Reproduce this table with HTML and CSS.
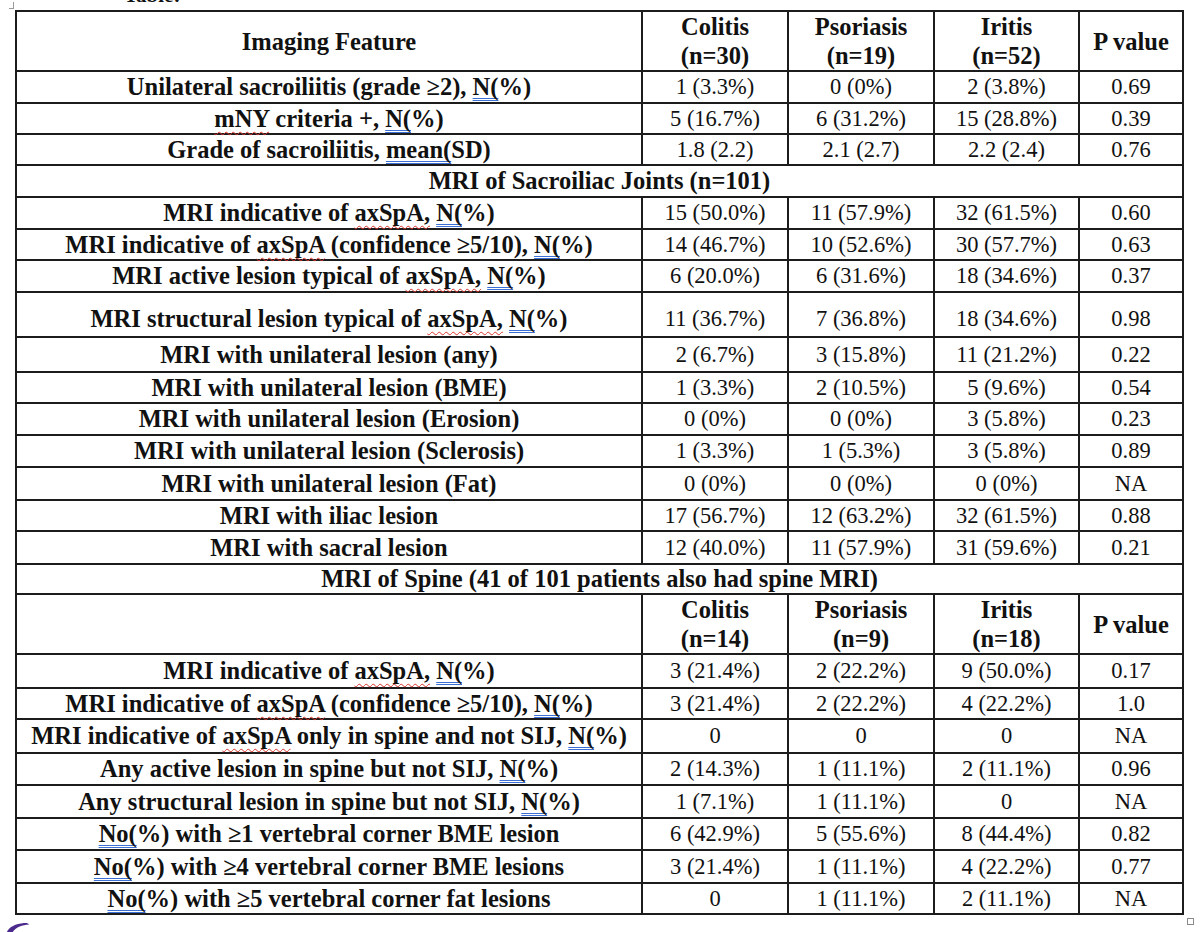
FILE: index.html
```html
<!DOCTYPE html>
<html lang="en">
<head>
<meta charset="utf-8">
<title>Imaging features table</title>
<link rel="stylesheet" href="styles.css">
</head>
<body>
<div class="page">
  <div class="caption">
    <span class="corner"></span>
    <span class="cap-clip"><span class="cap-text">Table:</span></span>
  </div>
  <table class="tbl">
    <colgroup>
      <col class="c1"><col class="c2"><col class="c3"><col class="c4"><col class="c5">
    </colgroup>
    <tbody>
      <tr class="h59 head">
        <th>Imaging Feature</th>
        <th>Colitis<br>(n=30)</th>
        <th>Psoriasis<br>(n=19)</th>
        <th>Iritis<br>(n=52)</th>
        <th>P value</th>
      </tr>
      <tr class="h32">
        <th>Unilateral sacroiliitis (grade ≥2), <span class="gr">N(</span>%)</th>
        <td>1 (3.3%)</td><td>0 (0%)</td><td>2 (3.8%)</td><td>0.69</td>
      </tr>
      <tr class="h31">
        <th><span class="sp">mNY</span> criteria +, <span class="gr">N(</span>%)</th>
        <td>5 (16.7%)</td><td>6 (31.2%)</td><td>15 (28.8%)</td><td>0.39</td>
      </tr>
      <tr class="h31">
        <th>Grade of sacroiliitis, <span class="gr">mean(</span>SD)</th>
        <td>1.8 (2.2)</td><td>2.1 (2.7)</td><td>2.2 (2.4)</td><td>0.76</td>
      </tr>
      <tr class="h32 section">
        <th colspan="5">MRI of Sacroiliac Joints (n=101)</th>
      </tr>
      <tr class="h32">
        <th>MRI indicative of <span class="sp">axSpA,</span> <span class="gr">N(</span>%)</th>
        <td>15 (50.0%)</td><td>11 (57.9%)</td><td>32 (61.5%)</td><td>0.60</td>
      </tr>
      <tr class="h31">
        <th>MRI indicative of <span class="sp">axSpA</span> (confidence ≥5/10), <span class="gr">N(</span>%)</th>
        <td>14 (46.7%)</td><td>10 (52.6%)</td><td>30 (57.7%)</td><td>0.63</td>
      </tr>
      <tr class="h32">
        <th>MRI active lesion typical of <span class="sp">axSpA,</span> <span class="gr">N(</span>%)</th>
        <td>6 (20.0%)</td><td>6 (31.6%)</td><td>18 (34.6%)</td><td>0.37</td>
      </tr>
      <tr class="h45 low">
        <th>MRI structural lesion typical of <span class="sp">axSpA,</span> <span class="gr">N(</span>%)</th>
        <td>11 (36.7%)</td><td>7 (36.8%)</td><td>18 (34.6%)</td><td>0.98</td>
      </tr>
      <tr class="h35">
        <th>MRI with unilateral lesion (any)</th>
        <td>2 (6.7%)</td><td>3 (15.8%)</td><td>11 (21.2%)</td><td>0.22</td>
      </tr>
      <tr class="h31">
        <th>MRI with unilateral lesion (BME)</th>
        <td>1 (3.3%)</td><td>2 (10.5%)</td><td>5 (9.6%)</td><td>0.54</td>
      </tr>
      <tr class="h32">
        <th>MRI with unilateral lesion (Erosion)</th>
        <td>0 (0%)</td><td>0 (0%)</td><td>3 (5.8%)</td><td>0.23</td>
      </tr>
      <tr class="h32">
        <th>MRI with unilateral lesion (Sclerosis)</th>
        <td>1 (3.3%)</td><td>1 (5.3%)</td><td>3 (5.8%)</td><td>0.89</td>
      </tr>
      <tr class="h33">
        <th>MRI with unilateral lesion (Fat)</th>
        <td>0 (0%)</td><td>0 (0%)</td><td>0 (0%)</td><td>NA</td>
      </tr>
      <tr class="h31">
        <th>MRI with iliac lesion</th>
        <td>17 (56.7%)</td><td>12 (63.2%)</td><td>32 (61.5%)</td><td>0.88</td>
      </tr>
      <tr class="h33">
        <th>MRI with sacral lesion</th>
        <td>12 (40.0%)</td><td>11 (57.9%)</td><td>31 (59.6%)</td><td>0.21</td>
      </tr>
      <tr class="h30 section">
        <th colspan="5">MRI of Spine (41 of 101 patients also had spine MRI)</th>
      </tr>
      <tr class="h60 head">
        <th></th>
        <th>Colitis<br>(n=14)</th>
        <th>Psoriasis<br>(n=9)</th>
        <th>Iritis<br>(n=18)</th>
        <th>P value</th>
      </tr>
      <tr class="h34">
        <th>MRI indicative of <span class="sp">axSpA,</span> <span class="gr">N(</span>%)</th>
        <td>3 (21.4%)</td><td>2 (22.2%)</td><td>9 (50.0%)</td><td>0.17</td>
      </tr>
      <tr class="h31">
        <th>MRI indicative of <span class="sp">axSpA</span> (confidence ≥5/10), <span class="gr">N(</span>%)</th>
        <td>3 (21.4%)</td><td>2 (22.2%)</td><td>4 (22.2%)</td><td>1.0</td>
      </tr>
      <tr class="h34">
        <th>MRI indicative of <span class="sp">axSpA</span> only in spine and not SIJ, <span class="gr">N(</span>%)</th>
        <td>0</td><td>0</td><td>0</td><td>NA</td>
      </tr>
      <tr class="h32">
        <th>Any active lesion in spine but not SIJ, <span class="gr">N(</span>%)</th>
        <td>2 (14.3%)</td><td>1 (11.1%)</td><td>2 (11.1%)</td><td>0.96</td>
      </tr>
      <tr class="h33">
        <th>Any structural lesion in spine but not SIJ, <span class="gr">N(</span>%)</th>
        <td>1 (7.1%)</td><td>1 (11.1%)</td><td>0</td><td>NA</td>
      </tr>
      <tr class="h32">
        <th><span class="gr">No(</span>%) with ≥1 vertebral corner BME lesion</th>
        <td>6 (42.9%)</td><td>5 (55.6%)</td><td>8 (44.4%)</td><td>0.82</td>
      </tr>
      <tr class="h33">
        <th><span class="gr">No(</span>%) with ≥4 vertebral corner BME lesions</th>
        <td>3 (21.4%)</td><td>1 (11.1%)</td><td>4 (22.2%)</td><td>0.77</td>
      </tr>
      <tr class="h31">
        <th><span class="gr">No(</span>%) with ≥5 vertebral corner fat lesions</th>
        <td>0</td><td>1 (11.1%)</td><td>2 (11.1%)</td><td>NA</td>
      </tr>
    </tbody>
  </table>
  <div class="foot">
    <svg class="swoosh" width="30" height="16" viewBox="0 0 30 16" aria-hidden="true">
      <path d="M6 16 C7 9 14 5 24 4 C27 3.8 29 4.5 29 5.5 C21 6 14 9 11 16 Z" fill="#4b2a8c"/>
    </svg>
    <span class="handle"></span>
  </div>
</div>
</body>
</html>
```

FILE: styles.css
```css
* { box-sizing: border-box; }

html, body {
  margin: 0;
  padding: 0;
  background: #ffffff;
}

body {
  font-family: "Liberation Serif", "Times New Roman", serif;
  color: #111;
}

.page {
  width: 1200px;
  height: 932px;
  overflow: hidden;
}

.caption {
  height: 10px;
  display: flex;
  align-items: flex-start;
}

.corner {
  width: 5px;
  height: 7px;
  margin-left: 9px;
  margin-top: 2px;
  border-right: 1px solid #9a9a9a;
  border-bottom: 1px solid #9a9a9a;
}

.cap-clip {
  display: block;
  height: 7px;
  overflow: hidden;
  margin-left: 110px;
}

.cap-text {
  display: block;
  margin-top: -16px;
  font-size: 21px;
  line-height: 22px;
  font-weight: bold;
}

.tbl {
  margin-left: 15px;
  width: 1169px;
  table-layout: fixed;
  border-collapse: separate;
  border-spacing: 0;
  border-left: 2px solid #1c1c1c;
  border-top: 2px solid #1c1c1c;
}

.c1 { width: 626px; }
.c2 { width: 146px; }
.c3 { width: 146px; }
.c4 { width: 145px; }
.c5 { width: 104px; }

.tbl th,
.tbl td {
  padding: 0;
  border-right: 2px solid #1c1c1c;
  border-bottom: 2px solid #1c1c1c;
  text-align: center;
  vertical-align: middle;
  white-space: nowrap;
}

.tbl th {
  font-weight: bold;
  font-size: 24.5px;
  line-height: 28px;
}

.tbl td {
  font-weight: normal;
  font-size: 22.5px;
  line-height: 26px;
}

.head th {
  line-height: 29px;
}

.low th,
.low td {
  padding-top: 9px;
}

.h30 { height: 30px; }
.h31 { height: 31px; }
.h32 { height: 32px; }
.h33 { height: 33px; }
.h34 { height: 34px; }
.h35 { height: 35px; }
.h45 { height: 45px; }
.h59 { height: 59px; }
.h60 { height: 60px; }

.sp {
  text-decoration: underline wavy #d8342c;
  text-decoration-thickness: 1px;
  text-underline-offset: 4px;
  text-decoration-skip-ink: none;
}

.gr {
  text-decoration: underline double #3b6fd4;
  text-decoration-thickness: 1px;
  text-underline-offset: 3px;
  text-decoration-skip-ink: none;
}

.foot {
  height: 18px;
  display: flex;
  justify-content: space-between;
  align-items: flex-start;
}

.swoosh {
  margin-top: 4px;
  margin-left: 0;
}

.handle {
  width: 7px;
  height: 7px;
  margin-top: 3px;
  margin-right: 6px;
  border: 1px solid #8a8a8a;
  background: #fff;
}
```
